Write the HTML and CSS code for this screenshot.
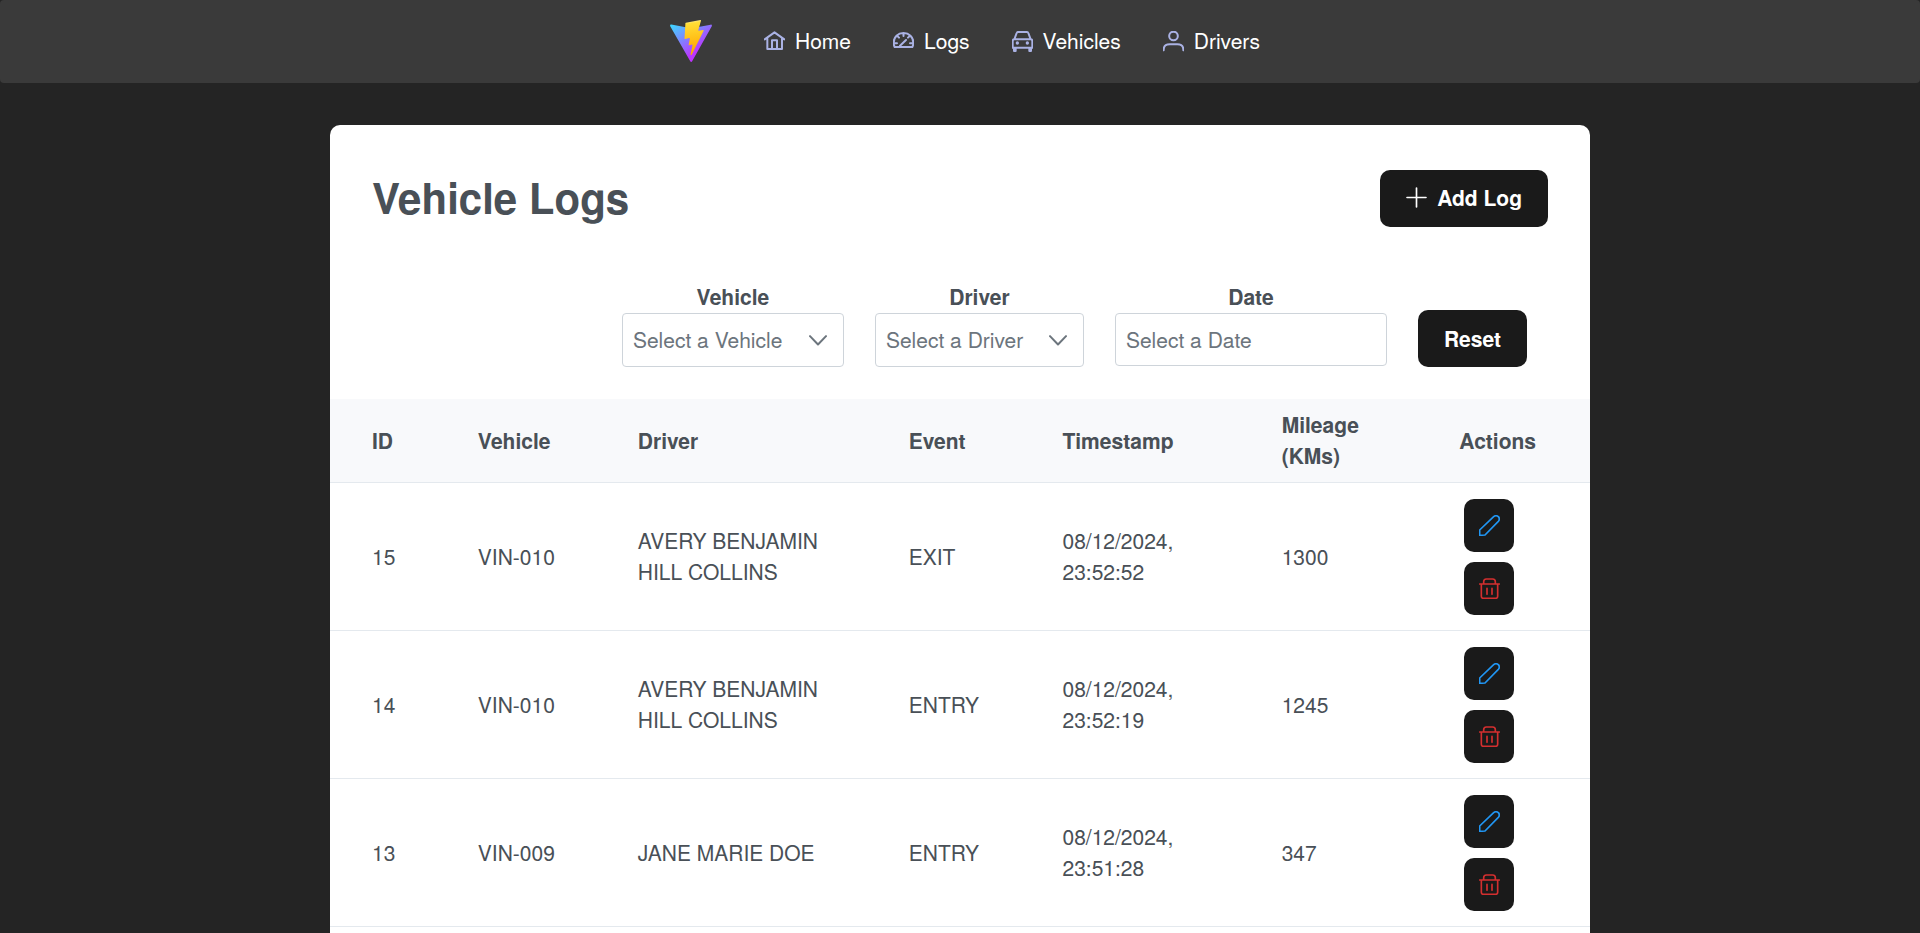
FILE: index.html
```html
<!DOCTYPE html>
<html lang="en">
<head>
<meta charset="utf-8">
<meta name="viewport" content="width=device-width, initial-scale=1">
<title>Vehicle Logs</title>
<link rel="stylesheet" href="styles.css">
</head>
<body>
<svg class="sprite" aria-hidden="true">
  <symbol id="i-home" viewBox="0 0 63 63"><path d="M2 25 31.5 4 61 25M10 21V54H54V21M24 54V28H39V54"/></symbol>
  <symbol id="i-gauge" viewBox="0 0 63 63"><path d="M5 48H58C60 44 61 40 61 35 61 18 48 6 31.5 6S2 18 2 35C2 40 3 44 5 48ZM31.5 6V15M14 16 18 20M49 16 45 20M4 37H12M51 37H59M21 44 39 27"/></symbol>
  <symbol id="i-car" viewBox="0 0 63 63"><path d="M7 25 14 6Q15 3 18 3H45Q48 3 49 6L56 25M7 25H56Q61 25 61 30V50H2V30Q2 25 7 25ZM6 51V60H11V51M52 51V60H57V51"/><circle class="fill" cx="16" cy="36" r="5"/><circle class="fill" cx="46" cy="36" r="5"/></symbol>
  <symbol id="i-user" viewBox="0 0 63 63"><circle cx="31.5" cy="15" r="13"/><path d="M2 58V56C2 45 10 40 20 40H43C53 40 61 45 61 56V58"/></symbol>
  <symbol id="i-plus" viewBox="0 0 63 63"><path d="M31.5 3V60M3 31.5H60"/></symbol>
  <symbol id="i-chevron" viewBox="0 0 54 32"><path d="M3 3 27 28 51 3"/></symbol>
  <symbol id="i-pencil" viewBox="0 0 63 63"><path d="M2 61V45L44 5Q51 -1 58 5 64 12 58 19L18 60Z"/></symbol>
  <symbol id="i-trash" viewBox="0 0 63 63"><path d="M2 18H61M14 17V11Q14 3 22 3H41Q49 3 49 11V17M7 18V55Q7 61 13 61H50Q56 61 56 55V18M24 31V49M39 31V49"/></symbol>
</svg>

<nav class="navbar" aria-label="Main">
  <a class="logo" href="#" aria-label="Start page">
    <svg viewBox="0 0 256 257" width="42" height="42">
      <defs>
        <linearGradient id="ga" x1="-.828%" x2="57.636%" y1="7.652%" y2="78.411%"><stop offset="0" stop-color="#41d1ff"/><stop offset="1" stop-color="#bd34fe"/></linearGradient>
        <linearGradient id="gb" x1="43.376%" x2="50.316%" y1="2.242%" y2="89.03%"><stop offset="0" stop-color="#ffea83"/><stop offset=".083" stop-color="#ffdd35"/><stop offset="1" stop-color="#ffa800"/></linearGradient>
      </defs>
      <path fill="url(#ga)" d="M255.153 37.938 134.897 252.976c-2.483 4.44-8.862 4.466-11.382.048L.875 37.958c-2.746-4.814 1.371-10.646 6.827-9.67l120.385 21.517a6.537 6.537 0 0 0 2.322-.004l117.867-21.483c5.438-.991 9.574 4.796 6.877 9.62Z"/>
      <path fill="url(#gb)" d="M185.432.063 96.44 17.501a3.268 3.268 0 0 0-2.634 3.014l-5.474 92.456a3.268 3.268 0 0 0 3.997 3.378l24.777-5.718c2.318-.535 4.413 1.507 3.936 3.838l-7.361 36.047c-.495 2.426 1.782 4.5 4.151 3.78l15.304-4.649c2.372-.72 4.652 1.36 4.15 3.788l-11.698 56.621c-.732 3.542 3.979 5.473 5.943 2.437l1.313-2.028 72.516-144.72c1.215-2.423-.88-5.186-3.54-4.672l-25.505 4.922c-2.396.462-4.435-1.77-3.759-4.114l16.646-57.705c.677-2.35-1.37-4.583-3.769-4.113Z"/>
    </svg>
  </a>
  <ul class="menu">
    <li><a href="#"><svg class="icon"><use href="#i-home"/></svg>Home</a></li>
    <li><a href="#"><svg class="icon"><use href="#i-gauge"/></svg>Logs</a></li>
    <li><a href="#"><svg class="icon"><use href="#i-car"/></svg>Vehicles</a></li>
    <li><a href="#"><svg class="icon"><use href="#i-user"/></svg>Drivers</a></li>
  </ul>
</nav>

<main class="card">
  <header class="card-head">
    <h1>Vehicle Logs</h1>
    <button class="btn" type="button"><svg class="icon"><use href="#i-plus"/></svg>Add Log</button>
  </header>

  <form class="filters">
    <div class="field">
      <label for="vehicle">Vehicle</label>
      <div class="select select-vehicle">
        <select id="vehicle"><option>Select a Vehicle</option></select>
        <svg class="chevron"><use href="#i-chevron"/></svg>
      </div>
    </div>
    <div class="field">
      <label for="driver">Driver</label>
      <div class="select select-driver">
        <select id="driver"><option>Select a Driver</option></select>
        <svg class="chevron"><use href="#i-chevron"/></svg>
      </div>
    </div>
    <div class="field">
      <label for="date">Date</label>
      <input class="date" id="date" type="text" placeholder="Select a Date">
    </div>
    <button class="btn" type="reset">Reset</button>
  </form>

  <table class="logs">
    <colgroup><col class="c-id"><col class="c-vehicle"><col class="c-driver"><col class="c-event"><col class="c-time"><col class="c-mileage"><col></colgroup>
    <thead>
      <tr><th scope="col">ID</th><th scope="col">Vehicle</th><th scope="col">Driver</th><th scope="col">Event</th><th scope="col">Timestamp</th><th scope="col">Mileage (KMs)</th><th scope="col">Actions</th></tr>
    </thead>
    <tbody>
      <tr><td>15</td><td>VIN-010</td><td>AVERY BENJAMIN HILL COLLINS</td><td>EXIT</td><td>08/12/2024, 23:52:52</td><td>1300</td>
        <td><div class="actions"><button class="act edit" type="button" aria-label="Edit log 15"><svg class="icon"><use href="#i-pencil"/></svg></button><button class="act delete" type="button" aria-label="Delete log 15"><svg class="icon"><use href="#i-trash"/></svg></button></div></td></tr>
      <tr><td>14</td><td>VIN-010</td><td>AVERY BENJAMIN HILL COLLINS</td><td>ENTRY</td><td>08/12/2024, 23:52:19</td><td>1245</td>
        <td><div class="actions"><button class="act edit" type="button" aria-label="Edit log 14"><svg class="icon"><use href="#i-pencil"/></svg></button><button class="act delete" type="button" aria-label="Delete log 14"><svg class="icon"><use href="#i-trash"/></svg></button></div></td></tr>
      <tr><td>13</td><td>VIN-009</td><td>JANE MARIE DOE</td><td>ENTRY</td><td>08/12/2024, 23:51:28</td><td>347</td>
        <td><div class="actions"><button class="act edit" type="button" aria-label="Edit log 13"><svg class="icon"><use href="#i-pencil"/></svg></button><button class="act delete" type="button" aria-label="Delete log 13"><svg class="icon"><use href="#i-trash"/></svg></button></div></td></tr>
    </tbody>
  </table>
</main>
</body>
</html>
```
FILE: styles.css
```css
* {
  box-sizing: border-box;
}

html {
  scrollbar-width: none;
}

body {
  margin: 0;
  background: #242424;
  color: #495057;
  font: 21px/31px "Nimbus Sans", "Nimbus Sans L", "TeX Gyre Heros", Helvetica, "Liberation Sans", Arial, sans-serif;
}

button,
input,
select {
  font: inherit;
}

.sprite {
  position: absolute;
  width: 0;
  height: 0;
}

.icon {
  width: 21px;
  height: 21px;
  flex: none;
  fill: none;
  stroke: currentColor;
  stroke-width: 5;
  stroke-linecap: round;
  stroke-linejoin: round;
  overflow: visible;
}

.fill {
  fill: currentColor;
  stroke: none;
}

.navbar {
  display: flex;
  align-items: center;
  justify-content: center;
  min-height: 83px;
  padding-bottom: 2px;
  background: #3a3a3a;
  border-radius: 4px;
}

.logo {
  display: flex;
  padding: 0 31px;
}

.menu {
  display: flex;
  margin: 0;
  padding: 0;
  list-style: none;
}

.menu a {
  display: flex;
  align-items: center;
  gap: 10px;
  padding: 0 21px;
  color: #fff;
  text-decoration: none;
}

.menu .icon {
  margin-top: 2px;
  color: #aab2e4;
  stroke-width: 6;
}

.card {
  max-width: 1260px;
  margin: 42px auto 0;
  padding: 42px 0;
  background: #fff;
  border-radius: 10px;
}

.card-head {
  display: flex;
  align-items: center;
  justify-content: space-between;
  padding: 0 42px;
}

h1 {
  margin: 0;
  padding-bottom: 2px;
  font-size: 42px;
  line-height: 61px;
}

.btn {
  display: inline-flex;
  align-items: center;
  gap: 10px;
  padding: 12px 26px 14px;
  border: 0;
  border-radius: 10px;
  background: #1a1a1a;
  color: #fff;
  font-weight: 700;
}

.filters {
  display: flex;
  flex-wrap: wrap;
  justify-content: flex-end;
  gap: 31px;
  padding: 51px 63px 32px;
}

.filters .btn {
  align-self: flex-end;
  padding: 13px 26px;
}

.field {
  display: flex;
  flex-direction: column;
  gap: 1px;
}

.field label {
  font-weight: 700;
  text-align: center;
}

.select {
  position: relative;
  height: 54px;
}

.select-vehicle {
  width: 222px;
}

.select-driver {
  width: 209px;
}

.select select,
.date {
  padding: 0 10px 2px;
  border: 1px solid #ced4da;
  border-radius: 4px;
  background: #fff;
  color: #6c757d;
}

.select select {
  width: 100%;
  height: 100%;
  appearance: none;
}

.date {
  width: 272px;
  height: 53px;
}

.date::placeholder {
  color: #6c757d;
  opacity: 1;
}

.chevron {
  position: absolute;
  top: 22px;
  right: 17px;
  width: 18px;
  height: 11px;
  fill: none;
  stroke: #6c757d;
  stroke-width: 6;
  stroke-linecap: round;
  stroke-linejoin: round;
  pointer-events: none;
}

.logs {
  width: 100%;
  table-layout: fixed;
  border-collapse: separate;
  border-spacing: 0;
}

.c-id { width: 8.4%; }
.c-vehicle { width: 12.7%; }
.c-driver { width: 21.5%; }
.c-event { width: 12.2%; }
.c-time { width: 17.4%; }
.c-mileage { width: 14.1%; }

.logs th,
.logs td {
  padding: 10px 21px 11px 42px;
  border-bottom: 1px solid #e4e9ee;
  text-align: left;
  vertical-align: middle;
}

.logs th {
  background: #f8f9fb;
}

.actions {
  display: flex;
  flex-direction: column;
  gap: 10px;
  padding: 6px 5px 4px;
}

.act {
  display: flex;
  align-items: center;
  justify-content: center;
  width: 50px;
  height: 53px;
  padding: 0;
  border: 0;
  border-radius: 10px;
  background: #1a1a1a;
}

.edit {
  color: #2196f3;
}

.delete {
  color: #d32f2f;
}
```
